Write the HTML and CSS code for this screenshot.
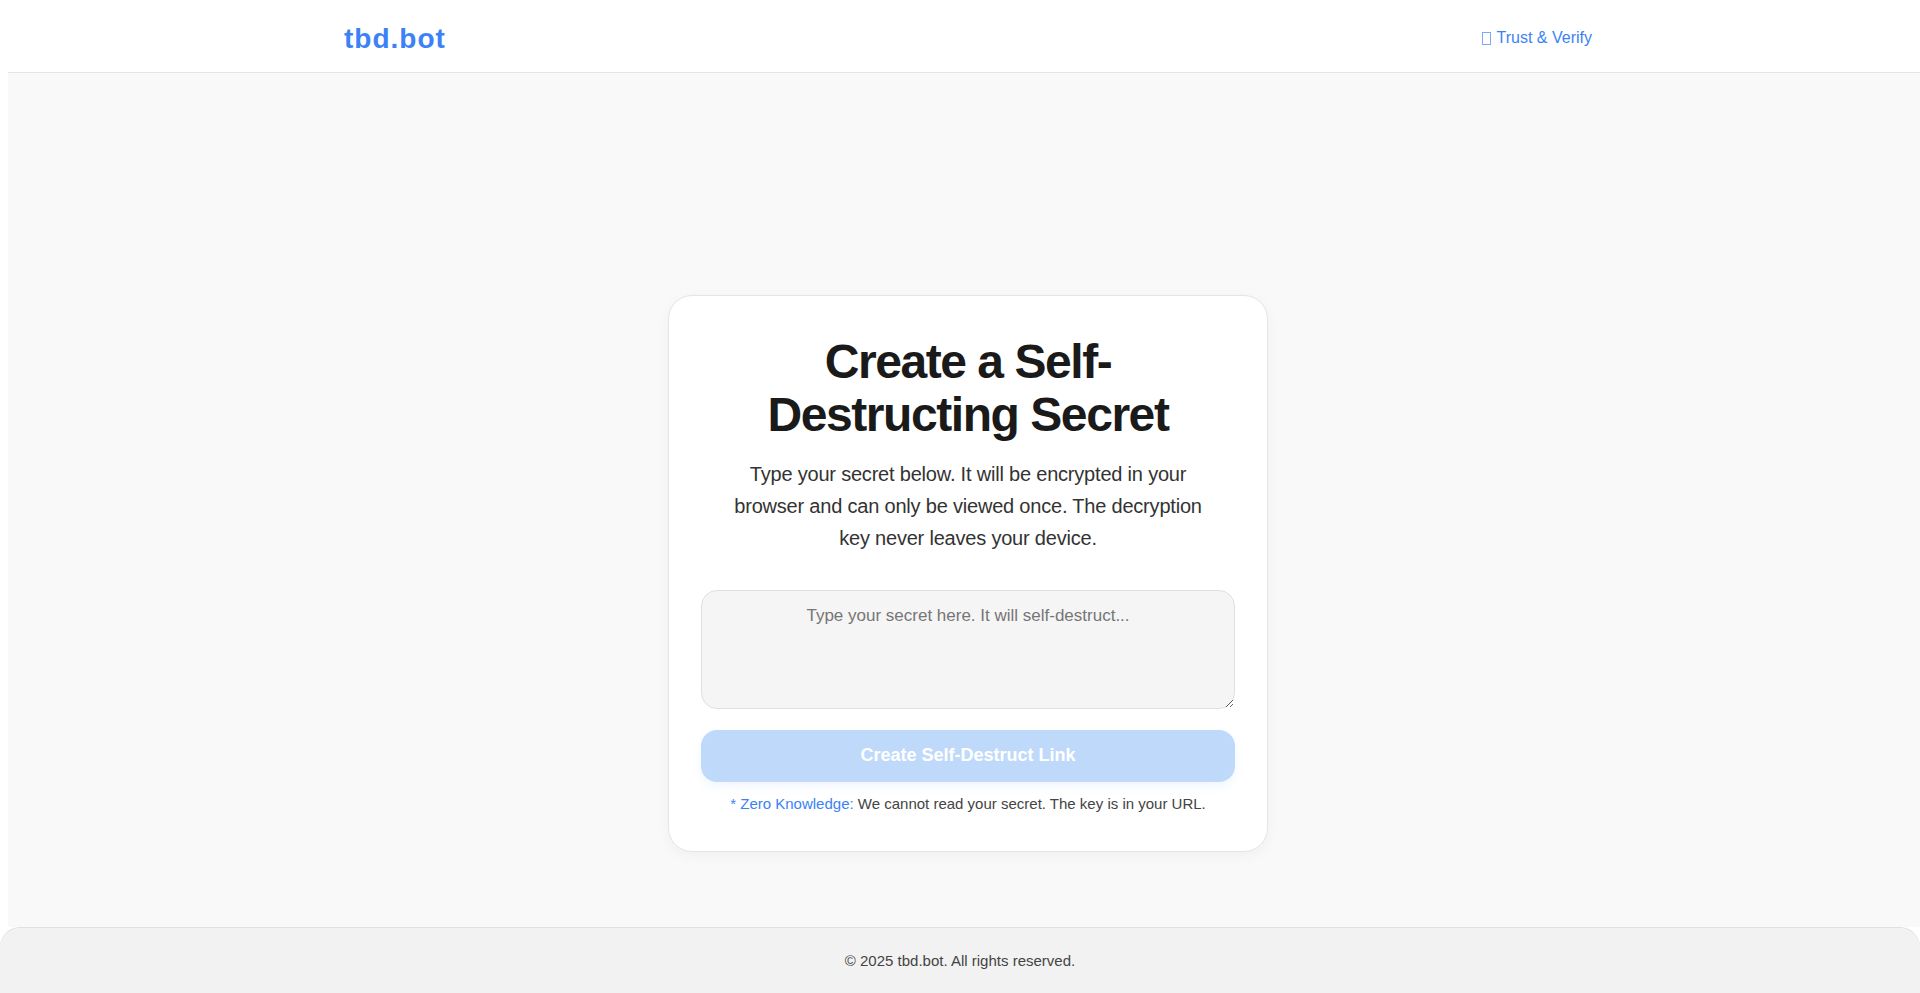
FILE: index.html
```html
<!DOCTYPE html>
<html lang="en">
<head>
    <meta charset="UTF-8">
    <meta name="viewport" content="width=device-width, initial-scale=1.0">
    <title>tbd.bot - Self-Destructing Secrets</title>
    <link rel="stylesheet" href="styles.css">
</head>
<body>
    <div class="page">
        <header class="site-header">
            <div class="header-inner">
                <a class="logo" href="#">tbd.bot</a>
                <a class="trust-link" href="#"><span class="tofu"></span>Trust &amp; Verify</a>
            </div>
        </header>

        <main class="main">
            <div class="card">
                <h1>Create a Self-Destructing Secret</h1>
                <p class="intro">Type your secret below. It will be encrypted in your browser and can only be viewed once. The decryption key never leaves your device.</p>

                <textarea id="secret-input" placeholder="Type your secret here. It will self-destruct..."></textarea>
                <button id="create-button" disabled>Create Self-Destruct Link</button>

                <p class="note"><span class="note-label">* Zero Knowledge:</span> We cannot read your secret. The key is in your URL.</p>
            </div>
        </main>
    </div>

    <!-- Footer -->
    <footer class="site-footer">
        &copy; 2025 tbd.bot. All rights reserved.
    </footer>
</body>
</html>
```

FILE: styles.css
```css
/* Base page */
html, body {
    margin: 0;
    padding: 0;
    background-color: #ffffff;
    font-family: "Liberation Sans", Arial, sans-serif;
    color: #333;
}

body {
    overflow-x: hidden;
}

/* Page wrapper sits 8px in from the left */
.page {
    margin-left: 8px;
    width: 100%;
}

/* Header */
.site-header {
    background-color: #ffffff;
    border-bottom: 1px solid #e5e5e5;
}

.header-inner {
    max-width: 1248px;
    height: 72px;
    margin: 0 auto;
    display: flex;
    justify-content: space-between;
    align-items: center;
}

.logo {
    font-size: 28px;
    font-weight: 700;
    letter-spacing: 1px;
    color: #3b82f6;
    text-decoration: none;
    margin-top: 6px;
}

.trust-link {
    display: flex;
    align-items: center;
    font-size: 16px;
    color: #3b82f6;
    text-decoration: none;
    margin-top: 4px;
}

/* Missing emoji glyph box */
.tofu {
    display: inline-block;
    width: 7px;
    height: 11px;
    border: 1px solid #7aa9f7;
    margin-right: 6px;
}

/* Main area */
.main {
    background-color: #f9f9f9;
    min-height: 854px;
    box-sizing: border-box;
    padding-top: 222px;
    display: flex;
    justify-content: center;
    align-items: flex-start;
}

/* Card */
.card {
    width: 600px;
    box-sizing: border-box;
    background-color: #ffffff;
    border: 1px solid #e5e5e5;
    border-radius: 24px;
    box-shadow: 0 4px 14px rgba(0, 0, 0, 0.04);
    padding: 40px 32px 36px;
    text-align: center;
}

.card h1 {
    font-size: 48px;
    font-weight: 700;
    line-height: 1.1;
    letter-spacing: -0.03em;
    color: #1a1a1a;
    margin: 0 auto 16px;
    max-width: 420px;
}

.intro {
    font-size: 20px;
    line-height: 1.6;
    letter-spacing: -0.2px;
    color: #333;
    max-width: 480px;
    margin: 0 auto 36px;
}

/* Secret input */
textarea {
    display: block;
    width: 100%;
    height: 119px;
    box-sizing: border-box;
    padding: 14px 16px;
    border: 1px solid #e0e0e0;
    border-radius: 16px;
    background-color: #f5f5f5;
    font-family: "Liberation Sans", Arial, sans-serif;
    font-size: 17px;
    line-height: 1.3;
    color: #222;
    text-align: center;
    resize: vertical;
}

textarea::placeholder {
    color: #767676;
}

/* Submit button */
#create-button {
    display: block;
    width: 100%;
    height: 52px;
    margin-top: 21px;
    border: none;
    border-radius: 16px;
    background-color: #bfd9fa;
    color: #ffffff;
    font-family: "Liberation Sans", Arial, sans-serif;
    font-size: 18px;
    font-weight: 700;
    box-shadow: 0 4px 10px rgba(59, 130, 246, 0.08);
    cursor: not-allowed;
}

.note {
    font-size: 15px;
    line-height: 1.5;
    color: #444;
    margin: 11px 0 0;
}

.note-label {
    color: #3b82f6;
}

/* Footer */
.site-footer {
    background-color: #f2f2f2;
    border-top: 1px solid #e0e0e0;
    border-radius: 20px 20px 0 0;
    padding: 24px;
    text-align: center;
    font-size: 15px;
    line-height: 17px;
    color: #444;
}
```
